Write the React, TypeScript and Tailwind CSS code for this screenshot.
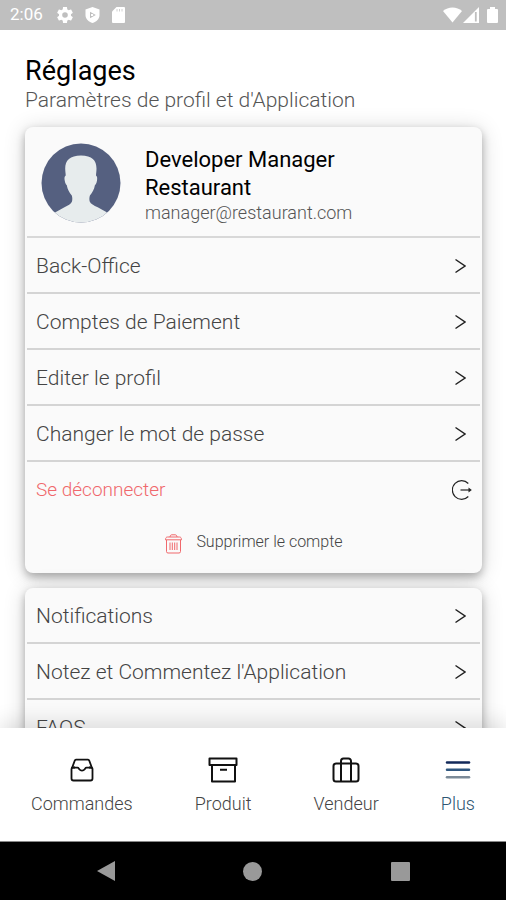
import type { ReactNode } from 'react';

const accountLinks = ['Back-Office', 'Comptes de Paiement', 'Editer le profil', 'Changer le mot de passe'];
const appLinks = ['Notifications', "Notez et Commentez l'Application", 'FAQS'];

export default function App() {
  return (
    <div className="flex h-screen flex-col overflow-hidden bg-white font-['Roboto',sans-serif] font-light text-[#444]">
      <StatusBar />

      <main className="min-h-0 flex-1 overflow-y-auto pt-[25px] pr-6 pl-[25px] [scrollbar-width:none]">
        <h1 className="text-[27px] leading-8 font-normal text-black">Réglages</h1>
        <p className="text-[21px] leading-[26px] text-[#555]">Paramètres de profil et d'Application</p>

        {/* Account */}
        <Card className="mt-3.5">
          <div className="flex h-[111px] items-center border-b-2 border-[#d8d8d8] pt-0.5 pl-3.5">
            <Avatar className="size-20 shrink-0" />
            <div className="ml-6 pt-1">
              <h2 className="max-w-60 text-[22px] leading-7 font-normal text-black">Developer Manager Restaurant</h2>
              <p className="text-[18px] leading-[22px] text-[#555]">manager@restaurant.com</p>
            </div>
          </div>
          {accountLinks.map((label) => (
            <Row key={label} label={label} />
          ))}
          <button type="button" className="flex h-14 w-full items-center justify-between pr-2 pl-[9px] text-[19px] text-[#f0686c]">
            Se déconnecter
            <LogoutIcon className="size-5 text-[#222]" />
          </button>
          <button type="button" className="flex h-[55px] w-full items-start justify-center gap-3 pt-3 text-[16px] leading-6">
            <TrashIcon className="mt-1 h-5 w-5 text-[#f0686c]" />
            Supprimer le compte
          </button>
        </Card>

        {/* Application */}
        <Card className="mt-[15px]">
          {appLinks.map((label) => (
            <Row key={label} label={label} />
          ))}
        </Card>
      </main>

      <nav className="relative flex h-[114px] shrink-0 justify-around border-b border-[#888] bg-white pt-[26px] shadow-[0_-6px_20px_rgba(0,0,0,0.12)]">
        <Tab label="Commandes" icon={<InboxIcon />} />
        <Tab label="Produit" icon={<ArchiveIcon />} />
        <Tab label="Vendeur" icon={<SuitcaseIcon />} />
        <Tab label="Plus" icon={<MenuIcon />} active />
      </nav>

      <SystemBar />
    </div>
  );
}

function Card({ className, children }: { className: string; children: ReactNode }) {
  return (
    <section className={`rounded-lg bg-[#fafafa] px-0.5 shadow-[0_4px_8px_rgba(0,0,0,0.28),0_2px_22px_rgba(0,0,0,0.16)] ${className}`}>
      {children}
    </section>
  );
}

function Row({ label }: { label: string }) {
  return (
    <a href="#" className="flex h-14 items-center justify-between border-b-2 border-[#d4d4d4] pt-0.5 pr-3.5 pl-[9px] text-[21px] leading-7">
      {label}
      <ChevronIcon className="h-4 w-3 text-[#222]" />
    </a>
  );
}

function Tab({ label, icon, active }: { label: string; icon: ReactNode; active?: boolean }) {
  return (
    <a href="#" className={`flex flex-col items-center gap-1 text-[18px] leading-7 ${active ? 'text-[#2f5673]' : 'text-[#444]'}`}>
      {icon}
      {label}
    </a>
  );
}

function StatusBar() {
  return (
    <header className="flex h-[30px] shrink-0 items-center justify-between bg-[#bfbfbf] pr-2 pl-2.5 text-white">
      <div className="flex items-center gap-3">
        <span className="mr-0.5 text-[17px] font-normal">2:06</span>
        <svg className="size-4" viewBox="2 2 20 20" fill="currentColor">
          <path d="M19.43 12.98c.04-.32.07-.64.07-.98s-.03-.66-.07-.98l2.11-1.65c.19-.15.24-.42.12-.64l-2-3.46c-.12-.22-.39-.3-.61-.22l-2.49 1c-.52-.4-1.08-.73-1.69-.98l-.38-2.65C14.46 2.18 14.25 2 14 2h-4c-.25 0-.46.18-.49.42l-.38 2.65c-.61.25-1.17.59-1.69.98l-2.49-1c-.23-.09-.49 0-.61.22l-2 3.46c-.13.22-.07.49.12.64l2.11 1.65c-.04.32-.07.65-.07.98s.03.66.07.98l-2.11 1.65c-.19.15-.24.42-.12.64l2 3.46c.12.22.39.3.61.22l2.49-1c.52.4 1.08.73 1.69.98l.38 2.65c.03.24.24.42.49.42h4c.25 0 .46-.18.49-.42l.38-2.65c.61-.25 1.17-.59 1.69-.98l2.49 1c.23.09.49 0 .61-.22l2-3.46c.12-.22.07-.49-.12-.64l-2.11-1.65zM12 15.5a3.5 3.5 0 1 1 0-7 3.5 3.5 0 0 1 0 7z" />
        </svg>
        <svg className="h-4 w-[15px]" viewBox="0 0 15 16">
          <path d="M7.500 0 14.500 2.500V8c0 4-3 6.800-7 8-4-1.200-7-4-7-8V2.500z" fill="currentColor" />
          <path d="M5 4.800v6.400L10.800 8z" fill="#bfbfbf" />
          <path d="M6 7v2h2.200V7z" fill="currentColor" />
        </svg>
        <svg className="h-4 w-[13px]" viewBox="0 0 13 16">
          <path d="M4.500 0H12a1 1 0 0 1 1 1v14a1 1 0 0 1-1 1H1a1 1 0 0 1-1-1V4.500z" fill="currentColor" />
          <path d="M5 2v2.500M7.500 2v2.500M10 2v2.500" stroke="#d0d0d0" />
        </svg>
      </div>
      <div className="flex items-center">
        <svg className="h-4 w-[19px]" viewBox="0 0 19 16" fill="currentColor">
          <path d="M0 4C5-.8 14-.8 19 4L9.500 15.500z" />
        </svg>
        <svg className="ml-px h-4 w-4" viewBox="0 0 16 16">
          <path d="M0 16 16 0v16z" fill="currentColor" />
          <path d="M12.800 5V14.500" stroke="#bfbfbf" strokeWidth="1.800" />
        </svg>
        <svg className="ml-2 h-4 w-[11px]" viewBox="0 0 11 16" fill="currentColor">
          <path d="M3 0h5v2h2a1 1 0 0 1 1 1v12a1 1 0 0 1-1 1H1a1 1 0 0 1-1-1V3a1 1 0 0 1 1-1h2z" />
        </svg>
      </div>
    </header>
  );
}

function SystemBar() {
  return (
    <footer className="grid h-[58px] shrink-0 grid-cols-3 items-center justify-items-center bg-black px-8 text-[#999]">
      <button type="button" aria-label="Retour">
        <svg className="h-[22px] w-[18px]" viewBox="0 0 18 22" fill="currentColor">
          <path d="M18 1v20L0 11z" />
        </svg>
      </button>
      <button type="button" aria-label="Accueil" className="size-[19px] rounded-full bg-[#999]" />
      <button type="button" aria-label="Applications récentes" className="size-[19px] rounded-[1px] bg-[#999]" />
    </footer>
  );
}

// Icons
function Avatar({ className }: { className?: string }) {
  return (
    <svg className={className} viewBox="0 0 80 80">
      <defs>
        <clipPath id="avatar">
          <circle cx="40" cy="40" r="39.500" />
        </clipPath>
      </defs>
      <g clipPath="url(#avatar)">
        <path d="M0 0h80v80H0z" fill="#556080" />
        <path
          d="M40 12.500c11 0 15.500 5 15.500 13 0 3-.5 5-.5 7 1.500 1 1.400 3 .9 5.500-.4 2-1 3.500-2 4.200-.7 4-2.500 7.300-5 10.300-.6 2-.7 4-.2 6 1 2.500 4 3.800 8 5.800l9 5V80H14V69.500l9-5c4-2 7-3.500 8-6 .5-2 .4-4-.2-6-2.500-3-4.300-6.300-5-10.300-1-.7-1.600-2.200-2-4.200-.5-2.500-.6-4.500.9-5.500 0-2-.5-4-.5-7 0-8 4.800-13 15.800-13z"
          fill="#e7eced"
        />
      </g>
    </svg>
  );
}

function ChevronIcon({ className }: { className?: string }) {
  return (
    <svg className={className} fill="none" stroke="currentColor" strokeWidth="1.500" viewBox="0 0 12 16">
      <path d="M1.500 1.500 11 8l-9.500 6.500" />
    </svg>
  );
}

function LogoutIcon({ className }: { className?: string }) {
  return (
    <svg className={className} fill="none" stroke="currentColor" viewBox="0 0 20 20">
      <path strokeWidth="1.200" d="M16.300 3.500A9.300 9.300 0 1 0 16.300 16.500" />
      <path strokeWidth="1.200" d="M8.500 10H18" />
      <path d="M16.500 7.500 19.800 10l-3.300 2.500z" fill="currentColor" stroke="none" />
    </svg>
  );
}

function TrashIcon({ className }: { className?: string }) {
  return (
    <svg className={className} fill="none" stroke="currentColor" viewBox="0 0 20 20">
      <path d="M2.500 6v11.500a1.500 1.500 0 0 0 1.500 1.500h11a1.500 1.500 0 0 0 1.500-1.500V6M1.500 5.800c0-1.800.7-2.800 2-2.800h12c1.300 0 2 1 2 2.800zM6 3c0-1.500.8-2.200 2-2.200h3c1.200 0 2 .7 2 2.200M6 8.500v7.500M8.300 8.500v7.500M10.700 8.500v7.500M13 8.500v7.500" />
    </svg>
  );
}

function InboxIcon() {
  return (
    <svg className="size-8 text-[#111]" fill="none" stroke="currentColor" strokeWidth="1.800" strokeLinejoin="round" viewBox="0 0 32 32">
      <path d="M9 13.500H7a1.500 1.500 0 0 0-1.500 1.500v9.500a2 2 0 0 0 2 2h17a2 2 0 0 0 2-2V15a1.500 1.500 0 0 0-1.500-1.500h-2" />
      <path d="M6 14 8.800 6.500a1.500 1.500 0 0 1 1.200-.8h12a1.500 1.500 0 0 1 1.200.8L26 14" />
      <path d="M6 13.700h5.500c1 0 1.200.8 1.800 1.600.6.800 1.500 1.400 2.700 1.400s2.100-.6 2.700-1.400c.6-.8.800-1.600 1.800-1.600H26" />
    </svg>
  );
}

function ArchiveIcon() {
  return (
    <svg className="size-8 text-[#111]" fill="none" stroke="currentColor" strokeWidth="2" viewBox="0 0 32 32">
      <path d="M2.500 4.500h27v6.500h-27zM5 11v16.500h23V11M13 15.800h7" strokeLinejoin="round" />
    </svg>
  );
}

function SuitcaseIcon() {
  return (
    <svg className="size-8 text-[#111]" fill="none" stroke="currentColor" strokeWidth="2" viewBox="0 0 32 32">
      <rect x="3.500" y="9.500" width="25" height="18" rx="2.500" />
      <path d="M11 27.500V7a2.500 2.500 0 0 1 2.500-2.500h5A2.500 2.500 0 0 1 21 7v20.500" />
    </svg>
  );
}

function MenuIcon() {
  return (
    <svg className="size-8" fill="none" strokeWidth="2.500" strokeLinecap="round" viewBox="0 0 32 32">
      <path d="M5 8.500h22" stroke="#12295a" />
      <path d="M5 15.800h22" stroke="#2f567f" />
      <path d="M5 23.200h22" stroke="#7b8a98" />
    </svg>
  );
}
